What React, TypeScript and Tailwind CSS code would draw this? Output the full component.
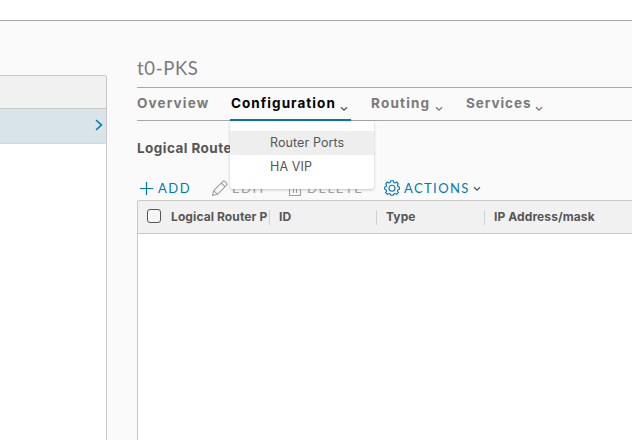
import type { ReactNode } from "react";

function Caret({ className = "" }: { className?: string }) {
  return (
    <svg className={className} width="8" height="6" viewBox="0 0 8 6" fill="none" stroke="currentColor" strokeWidth="1.3">
      <path d="M1 1.2 4 4.2 7 1.2" />
    </svg>
  );
}

function Tab({ children, className }: { children: ReactNode; className: string }) {
  return (
    <div className={`flex h-[33px] shrink-0 text-[13.5px] leading-[30px] font-bold ${className}`}>
      {children}
    </div>
  );
}

function Sidebar() {
  return (
    <aside className="mt-[54px] h-[380px] w-[107px] shrink-0 overflow-hidden rounded-tr-[3px] border-t border-r border-[#c8c8c8] bg-white">
      <div className="h-[33px] border-b border-[#c8c8c8] bg-[#f1f1f1]" />
      <div className="flex h-[35px] items-center justify-end border-b border-[#d2dbe0] bg-[#d9e4ea] pr-[3px] pb-[2px]">
        <svg width="8" height="12" viewBox="0 0 8 12" fill="none" stroke="#0079b8" strokeWidth="1.6">
          <path d="M1 1 6.4 6 1 11" />
        </svg>
      </div>
    </aside>
  );
}

function Menu() {
  return (
    <div className="absolute top-[33px] left-[93px] h-[68px] w-[144px] rounded-[3px] bg-white pt-[10px] text-[12.5px] text-[#565656] shadow-[0_1px_3px_rgba(0,0,0,0.22)]">
      <div className="h-6 bg-[#eeeeee] pl-10 leading-[23px] tracking-[0.1px]">Router Ports</div>
      <div className="h-6 pl-10 leading-[24px] tracking-[0.1px]">HA VIP</div>
    </div>
  );
}

function Toolbar() {
  return (
    <div className="flex h-6 items-center font-['Lato',sans-serif] text-[13px] text-[#a0a0a0]">
      <div className="flex w-[74px] shrink-0 items-center text-[#0079b8]">
        <svg className="ml-[2px] shrink-0" width="14" height="14" viewBox="0 0 14 14" stroke="currentColor" strokeWidth="1.2">
          <path d="M7.5 1v13M1 7.5h13" />
        </svg>
        <span className="mt-px ml-[5px] tracking-[1.5px]">ADD</span>
      </div>
      <div className="flex w-[77px] shrink-0 items-center">
        <svg className="shrink-0" width="18" height="18" viewBox="0 0 18 18" fill="none" stroke="currentColor" strokeWidth="1.1" strokeLinejoin="round">
          <path d="m1.5 16.5 1.2-4.8L11.9 2.4q1-1 2 0l1.7 1.7q1 1 0 2L6.4 15.3zM10.3 4 14 7.7M2.7 11.7l3.7 3.6" />
        </svg>
        <span className="mt-px ml-[3px] tracking-[1.5px]">EDIT</span>
      </div>
      <div className="flex w-[96px] shrink-0 items-center">
        <svg className="mt-px shrink-0" width="14" height="16" viewBox="0 0 14 16" fill="none" stroke="currentColor" strokeWidth="1.1">
          <path d="M1 3.5h12M4.5 3V1.5h5V3M1.5 3.5v11h11v-11M5.5 6v6M8.5 6v6" />
        </svg>
        <span className="mt-px ml-[5px] tracking-[1.6px]">DELETE</span>
      </div>
      <div className="flex shrink-0 items-center text-[#0079b8]">
        <svg className="shrink-0" width="16" height="16" viewBox="0 0 16 16" fill="none" stroke="currentColor" strokeWidth="1.1" strokeLinejoin="round">
          <path d="M6.7.7h2.6l.4 1.8 1.3.5 1.6-1 1.8 1.8-1 1.6.5 1.3 1.5.4v2.2l-1.5.4-.5 1.3 1 1.6-1.8 1.8-1.6-1-1.3.5-.4 1.4H6.7l-.4-1.4-1.3-.5-1.6 1-1.8-1.8 1-1.6-.5-1.3-1.4-.4V7.1l1.4-.4.5-1.3-1-1.6L3.4 2l1.6 1 1.3-.5z" />
          <circle cx="8" cy="8.2" r="3" />
        </svg>
        <span className="mt-px ml-[4px] tracking-[1.4px]">ACTIONS</span>
        <Caret className="mt-[2px] ml-[3px] text-[#565656]" />
      </div>
    </div>
  );
}

function Column({ label, width }: { label: string; width: string }) {
  return (
    <div className={`flex shrink-0 items-center overflow-hidden ${width}`}>
      <span className="grow overflow-hidden whitespace-nowrap">{label}</span>
      <span className="h-[15px] w-px shrink-0 bg-[#d0d0d0]" />
    </div>
  );
}

function PortTable() {
  return (
    <div className="h-[242px] rounded-tl-[3px] border-t border-l border-[#c8c8c8] bg-white">
      <div className="flex h-[33px] items-stretch rounded-tl-[2px] border-b border-[#c8c8c8] bg-[#f1f1f1] text-[12px] font-bold tracking-[0.1px] text-[#565656]">
        <div className="flex w-[33px] shrink-0 pt-[8px] pl-[9px]">
          <span className="h-[14px] w-[14px] rounded-[3px] border-[1.5px] border-[#565656] bg-[#f6f6f6]" />
        </div>
        <Column label="Logical Router P" width="w-[99px]" />
        <Column label="ID" width="ml-[9px] w-[98px]" />
        <Column label="Type" width="ml-[9px] w-[99px]" />
        <div className="ml-[9px] flex items-center whitespace-nowrap">IP Address/mask</div>
      </div>
    </div>
  );
}

export default function App() {
  return (
    <div className="h-[440px] w-[632px] overflow-hidden bg-[#fafafa] font-['Inter','Lato',sans-serif] text-[#565656]">
      <header className="h-[21px] border-b border-[#a7a7a7] bg-white" />
      <div className="flex">
        <Sidebar />
        <main className="ml-[30px] min-w-0 grow">
          <h1 className="h-[66px] pt-[33px] font-['Lato',sans-serif] text-[18.5px] leading-[28px] tracking-[0.65px] text-[#7a7a7a]">t0-PKS</h1>
          <nav className="relative flex h-[34px] border-t border-b border-[#a7a7a7] text-[#7a7a7a]">
            <Tab className="w-[93px] tracking-[1.15px]">Overview</Tab>
            <Tab className="-mb-px w-[121px] justify-between border-b-2 border-[#0079b8] pr-[3px] pl-px tracking-[1.05px] text-black">
              Configuration
              <Caret className="mt-[18px] text-[#565656]" />
            </Tab>
            <Tab className="ml-[20px] w-[72px] justify-between tracking-[1.2px]">
              Routing
              <Caret className="mt-[18px]" />
            </Tab>
            <Tab className="ml-[23px] w-[77px] justify-between tracking-[0.95px]">
              Services
              <Caret className="mt-[18px]" />
            </Tab>
            <Menu />
          </nav>
          <h2 className="h-[55px] pt-[17px] text-[13.5px] leading-[20px] font-bold tracking-[0.45px]">Logical Router Ports</h2>
          <Toolbar />
          <PortTable />
        </main>
      </div>
    </div>
  );
}
